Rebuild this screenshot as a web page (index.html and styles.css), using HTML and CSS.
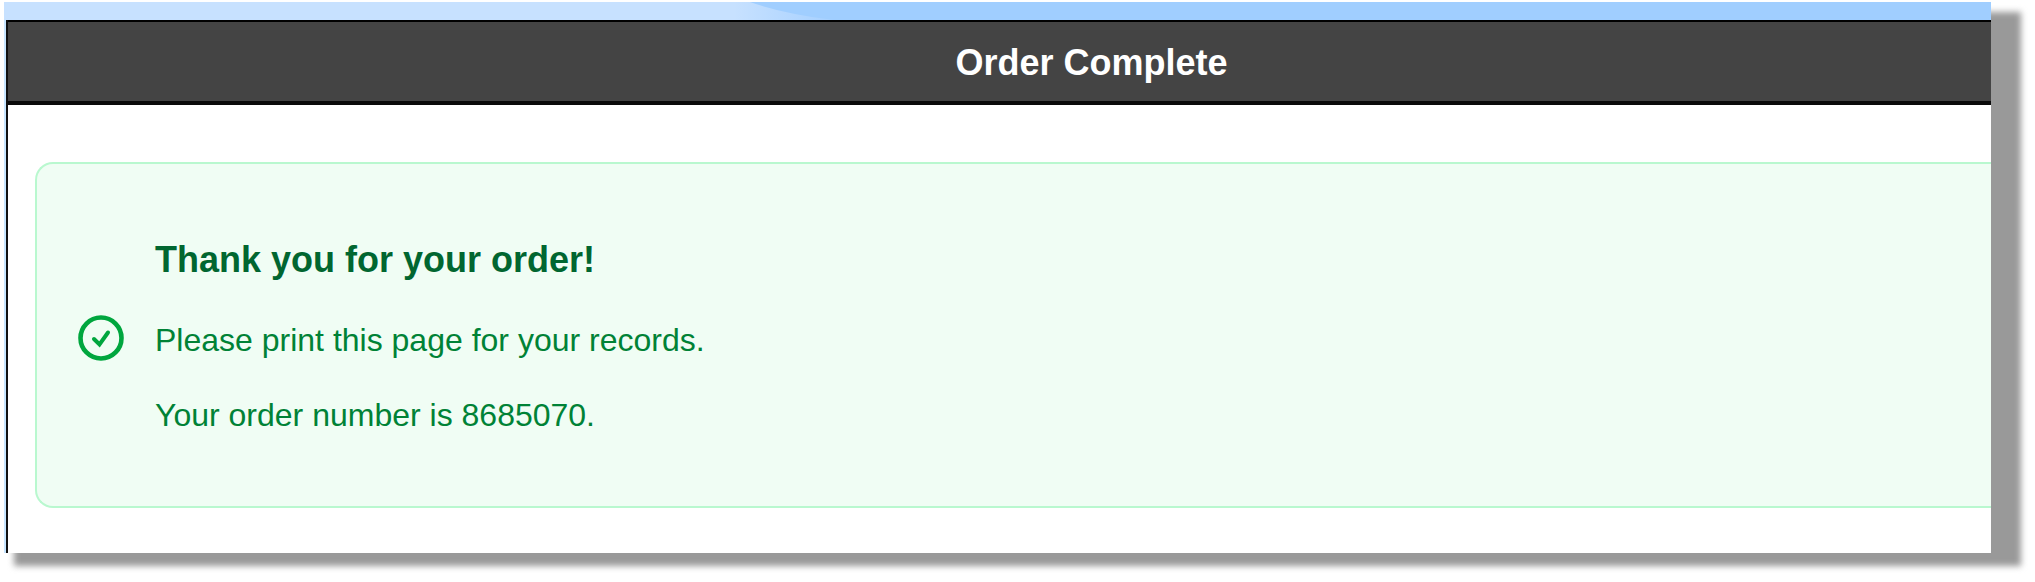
FILE: index.html
```html
<!DOCTYPE html>
<html lang="en">
<head>
<meta charset="utf-8">
<title>Order Complete</title>
<link rel="stylesheet" href="styles.css">
</head>
<body>
<div class="frame">
  <div class="page">
    <svg class="sky" viewBox="0 0 1987 18" preserveAspectRatio="none" aria-hidden="true">
      <defs>
        <linearGradient id="haze" gradientUnits="userSpaceOnUse" x1="0" x2="830" y1="0" y2="0">
          <stop offset="0" stop-color="#c7e1ff"/>
          <stop offset="0.88" stop-color="#c7e1ff"/>
          <stop offset="1" stop-color="#a6d0ff"/>
        </linearGradient>
      </defs>
      <rect width="1987" height="18" fill="#a0ceff"/>
      <path d="M0 0H746Q780 12 830 18H0Z" fill="url(#haze)"/>
    </svg>
    <main class="panel">
      <header class="panel-header">
        <h1 class="panel-title">Order Complete</h1>
      </header>
      <div class="panel-body">
        <section class="notice">
          <svg class="notice-icon" viewBox="0 0 46 46" fill="none" stroke="#00a63e" aria-hidden="true">
            <circle cx="23" cy="23" r="20.5" stroke-width="4.6"/>
            <path d="M16 24l5.5 5.5L30 17.5" stroke-width="4" stroke-linecap="round"/>
          </svg>
          <div class="notice-text">
            <h2 class="notice-title">Thank you for your order!</h2>
            <p class="notice-line">Please print this page for your records.</p>
            <p class="notice-line">Your order number is 8685070.</p>
          </div>
        </section>
      </div>
    </main>
  </div>
</div>
</body>
</html>
```
FILE: styles.css
```css
* {
  box-sizing: border-box;
}

body {
  margin: 0;
  background: #fff;
  font-family: "Liberation Sans", Arial, sans-serif;
}

.frame {
  position: relative;
  isolation: isolate;
  margin: 2px 44px 26px 4px;
}

.frame::before {
  content: "";
  position: absolute;
  z-index: -1;
  inset: 10px -30px -13px 10px;
  background: #999;
  filter: blur(3px);
}

.page {
  overflow: hidden;
  background: #c7e5ff;
}

.sky {
  display: block;
  width: 100%;
  height: 18px;
}

.panel {
  margin-left: 2px;
  border-left: 2px solid #111;
  background: #fff;
}

.panel-header {
  padding: 21px 0 18px 184px;
  border-top: 2px solid #000;
  border-bottom: 4px solid #0a0a0a;
  background: #444;
}

.panel-title {
  margin: 0;
  font-size: 36px;
  line-height: 40px;
  color: #fff;
  text-align: center;
}

.panel-body {
  padding: 57px 0 45px 27px;
}

.notice {
  display: flex;
  align-items: center;
  gap: 31px;
  padding: 66px 41px 61px;
  border: 2px solid #b9f8cf;
  border-right: 0;
  border-radius: 18px 0 0 18px;
  background: #f0fdf4;
}

.notice-icon {
  flex: none;
  width: 46px;
  height: 46px;
}

.notice-text {
  padding-top: 6px;
}

.notice-title {
  margin: 0 0 26px;
  font-size: 36px;
  line-height: 48px;
  color: #016630;
}

.notice-line {
  margin: 0;
  font-size: 32px;
  line-height: 60px;
  color: #008236;
}

.notice-line + .notice-line {
  margin-top: 15px;
}
```
